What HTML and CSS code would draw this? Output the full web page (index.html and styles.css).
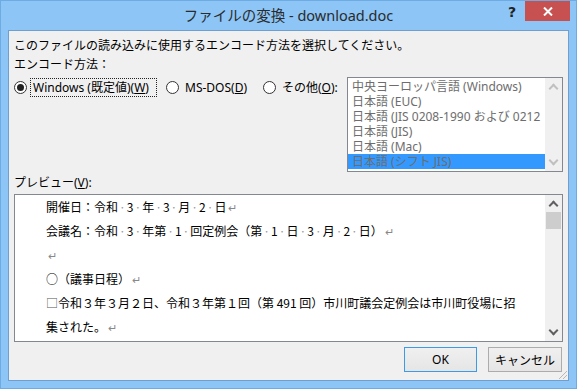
FILE: index.html
```html
<!DOCTYPE html>
<html lang="ja">

<head>
    <meta charset="UTF-8">
    <title>ファイルの変換</title>
    <link rel="stylesheet" href="styles.css">
</head>

<body>
    <div class="window">
        <div class="titlebar">
            <span></span>
            <span class="title">ファイルの変換 - download.doc</span>
            <div class="controls">
                <span class="help">?</span>
                <span class="close">
                    <svg width="10" height="9" viewBox="0 0 10 9">
                        <path d="M1 0.5 L9 8.5 M9 0.5 L1 8.5" stroke="#fff" stroke-width="2" fill="none" />
                    </svg>
                </span>
            </div>
        </div>

        <div class="client">
            <p class="intro">このファイルの読み込みに使用するエンコード方法を選択してください。</p>
            <p class="caption">エンコード方法：</p>

            <div class="encoding">
                <div class="radios">
                    <label class="radio checked">
                        <span class="circle"></span>
                        <span class="text focus wide">Windows (既定値)(<u>W</u>)</span>
                    </label>
                    <label class="radio">
                        <span class="circle"></span>
                        <span class="text mid">MS-DOS(<u>D</u>)</span>
                    </label>
                    <label class="radio">
                        <span class="circle"></span>
                        <span class="text">その他(<u>O</u>):</span>
                    </label>
                </div>

                <div class="listbox">
                    <ul class="items">
                        <li>中央ヨーロッパ言語 (Windows)</li>
                        <li>日本語 (EUC)</li>
                        <li>日本語 (JIS 0208-1990 および 0212</li>
                        <li>日本語 (JIS)</li>
                        <li>日本語 (Mac)</li>
                        <li class="selected">日本語 (シフト JIS)</li>
                    </ul>
                    <div class="scrollbar disabled">
                        <span class="arrow up"></span>
                        <span class="arrow down"></span>
                    </div>
                </div>
            </div>

            <p class="caption preview-label">プレビュー(<u>V</u>):</p>

            <div class="preview">
                <div class="doc">
                    <p>開催日：令和<i>·</i>3<i>·</i>年<i>·</i>3<i>·</i>月<i>·</i>2<i>·</i>日<b>↵</b></p>
                    <p>会議名：令和<i>·</i>3<i>·</i>年第<i>·</i>1<i>·</i>回定例会（第<i>·</i>1<i>·</i>日<i>·</i>3<i>·</i>月<i>·</i>2<i>·</i>日）<b>↵</b></p>
                    <p><b>↵</b></p>
                    <p>○（議事日程）<b>↵</b></p>
                    <p><span class="space">□</span>令和３年３月２日、令和３年第１回（第 491 回）市川町議会定例会は市川町役場に招</p>
                    <p>集された。<b>↵</b></p>
                </div>
                <div class="scrollbar">
                    <span class="arrow up"></span>
                    <span class="thumb"></span>
                    <span class="arrow down"></span>
                </div>
            </div>

            <div class="buttons">
                <button type="button" class="default">OK</button>
                <button type="button">キャンセル</button>
            </div>

            <span class="grip"></span>
        </div>
    </div>
</body>

</html>
```

FILE: styles.css
```css
* {
    box-sizing: border-box;
}

body {
    margin: 0;
    font-family: "Noto Sans", "Noto Sans CJK JP", sans-serif;
    font-size: 12px;
    color: #000;
    background: #8cc5f6;
}

p {
    margin: 0;
}

.window {
    width: 577px;
    height: 389px;
    background: #8cc5f6;
    border: 1px solid #6fabe3;
    padding: 0 7px 7px;
}

/* title bar */
.titlebar {
    height: 29px;
    margin: 0 -7px;
    display: grid;
    grid-template-columns: 1fr auto 1fr;
    align-items: start;
}

.title {
    font-size: 14.5px;
    line-height: 29px;
    color: #2b2b2b;
    white-space: nowrap;
}

.controls {
    display: flex;
    justify-content: flex-end;
    padding-right: 6px;
}

.help {
    width: 26px;
    height: 20px;
    line-height: 22px;
    text-align: center;
    font-family: "DejaVu Sans", sans-serif;
    font-weight: bold;
    font-size: 14px;
    color: #222;
}

.close {
    width: 45px;
    height: 20px;
    background: #c75050;
    display: flex;
    justify-content: center;
    align-items: center;
}

/* client area */
.client {
    position: relative;
    height: 351px;
    background: #f0f0f0;
    border: 1px solid #6f9fd1;
    padding: 7px 5px 0;
}

.intro,
.caption {
    line-height: 16px;
}

.caption {
    margin-top: 3px;
}

.encoding {
    display: flex;
    align-items: flex-start;
    margin-top: 4px;
}

.radios {
    flex: 1;
    min-width: 0;
    display: flex;
    margin-top: 1px;
}

.radio {
    display: flex;
    align-items: center;
    height: 19px;
    margin-right: 9px;
}

.circle {
    width: 13px;
    height: 13px;
    border: 1px solid #333;
    border-radius: 50%;
    background: #fff;
    display: flex;
    justify-content: center;
    align-items: center;
    margin-right: 3px;
}

.radio.checked .circle::after {
    content: '';
    width: 7px;
    height: 7px;
    border-radius: 50%;
    background: #222;
}

.text {
    padding: 0 2px;
    line-height: 17px;
    border: 1px dotted transparent;
    white-space: nowrap;
}

.text.wide {
    width: 127px;
}

.text.mid {
    width: 72px;
}

.text.focus {
    border-color: #222;
}

/* encoding list */
.listbox {
    flex: none;
    width: 216px;
    height: 95px;
    border: 1px solid #828790;
    background: #fff;
    display: flex;
}

.items {
    list-style: none;
    margin: 0;
    padding: 1px 0 0;
    flex: 1;
    overflow: hidden;
    color: #6d6d6d;
}

.items li {
    height: 15px;
    line-height: 15px;
    padding-left: 4px;
    white-space: nowrap;
    overflow: hidden;
}

.items .selected {
    background: #3399ff;
}

.scrollbar {
    flex: none;
    width: 17px;
    background: #f0f0f0;
    display: flex;
    flex-direction: column;
    align-items: center;
}

.arrow {
    width: 17px;
    height: 17px;
    display: flex;
    justify-content: center;
    align-items: center;
}

.arrow::before {
    content: '';
    width: 5px;
    height: 5px;
    border-left: 2px solid #606060;
    border-top: 2px solid #606060;
}

.arrow.up::before {
    transform: translateY(2px) rotate(45deg);
}

.arrow.down {
    margin-top: auto;
}

.arrow.down::before {
    transform: translateY(-2px) rotate(225deg);
}

.scrollbar.disabled .arrow::before {
    border-color: #c0c0c0;
}

.preview-label {
    margin-top: 3px;
}

/* preview */
.preview {
    height: 148px;
    margin-top: 3px;
    border: 1px solid #828790;
    background: #fff;
    display: flex;
}

.doc {
    flex: 1;
    padding-left: 31px;
    overflow: hidden;
    font-family: "Noto Sans CJK JP", sans-serif;
}

.doc p {
    line-height: 24px;
    white-space: nowrap;
}

.doc i {
    font-style: normal;
    color: #999;
    padding: 0 1px;
}

.doc b {
    font-weight: normal;
    color: #888;
    font-size: 11px;
    margin-left: 2px;
}

.space {
    color: #555;
}

.thumb {
    width: 15px;
    height: 17px;
    background: #cdcdcd;
}

/* buttons */
.buttons {
    display: flex;
    justify-content: flex-end;
    gap: 11px;
    margin-top: 5px;
    padding-right: 1px;
}

button {
    font-family: "Noto Sans", "Noto Sans CJK JP", sans-serif;
    font-size: 12px;
    width: 73px;
    height: 25px;
    padding: 0;
    border: 1px solid #acacac;
    background: linear-gradient(#f0f0f0, #e5e5e5);
    color: #000;
}

button + button {
    width: 74px;
}

button.default {
    border-color: #3c9ae6;
}

.grip {
    position: absolute;
    right: 1px;
    bottom: 1px;
    width: 10px;
    height: 10px;
    background: repeating-linear-gradient(135deg, transparent 0 2px, #b8b8b8 2px 3px);
    clip-path: polygon(100% 0, 100% 100%, 0 100%);
}
```
